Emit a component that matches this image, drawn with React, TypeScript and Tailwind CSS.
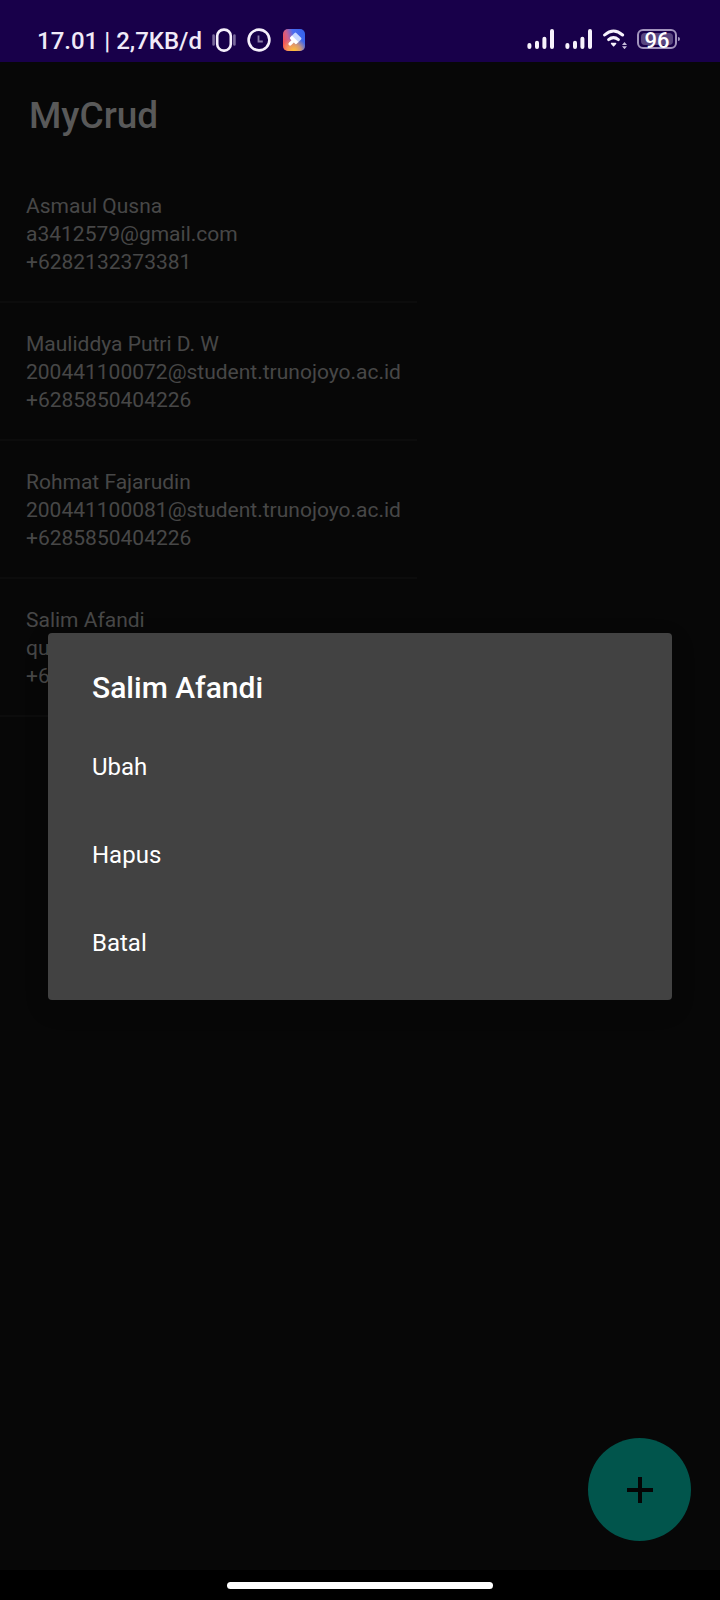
type Contact = { name: string; email: string; phone: string };

const contacts: Contact[] = [
  { name: "Asmaul Qusna", email: "a3412579@gmail.com", phone: "+6282132373381" },
  { name: "Mauliddya Putri D. W", email: "200441100072@student.trunojoyo.ac.id", phone: "+6285850404226" },
  { name: "Rohmat Fajarudin", email: "200441100081@student.trunojoyo.ac.id", phone: "+6285850404226" },
  { name: "Salim Afandi", email: "qu", phone: "+6" },
];

const actions = ["Ubah", "Hapus", "Batal"];

function VibrateIcon() {
  return (
    <svg className="h-6 w-6" viewBox="0 0 24 24" fill="none">
      <rect x="5.2" y="1.6" width="13.6" height="21" rx="6.5" stroke="#f5effb" strokeWidth="2.6" />
      <path d="M1.6 7.5v9M22.4 7.5v9" stroke="#7a6a9c" strokeWidth="2.6" strokeLinecap="round" />
    </svg>
  );
}

function ClockIcon() {
  return (
    <svg className="h-6 w-6" viewBox="0 0 24 24" fill="none">
      <circle cx="12" cy="12" r="10.4" stroke="#f5effb" strokeWidth="2.6" />
      <path d="M11.5 7.5v6h4.3" stroke="#8a7ba8" strokeWidth="1.8" />
    </svg>
  );
}

function ThemeIcon() {
  return (
    <svg className="h-6 w-6" viewBox="0 0 24 24">
      <defs>
        <linearGradient id="theme-base" x1="0" y1="0.6" x2="1" y2="0.3">
          <stop offset="0" stopColor="#f7504e" />
          <stop offset="0.25" stopColor="#d0608c" />
          <stop offset="0.55" stopColor="#4a6cf0" />
          <stop offset="1" stopColor="#3763ea" />
        </linearGradient>
        <radialGradient id="theme-glow" cx="0.5" cy="1" r="0.6">
          <stop offset="0" stopColor="#ffc233" />
          <stop offset="0.5" stopColor="#f9a654" stopOpacity="0.8" />
          <stop offset="1" stopColor="#f9a654" stopOpacity="0" />
        </radialGradient>
      </defs>
      <rect x="1" y="1" width="22" height="22" rx="5" fill="url(#theme-base)" />
      <rect x="1" y="1" width="22" height="22" rx="5" fill="url(#theme-glow)" />
      <g transform="rotate(45 12 12)">
        <path d="M7.4 6.6a1.2 1.2 0 0 1 1.2-1.2h6.8a1.2 1.2 0 0 1 1.2 1.2v4.2H7.4z" fill="#c9d8ff" />
        <path d="M7.4 10.3h9.2v2.4a1.2 1.2 0 0 1-1.2 1.2h-1.7v3.6a1.7 1.7 0 0 1-3.4 0v-3.6H8.6a1.2 1.2 0 0 1-1.2-1.2z" fill="#fff" />
      </g>
    </svg>
  );
}

function SignalIcon() {
  return (
    <svg className="h-5 w-7" viewBox="0 0 28 20" stroke="#f7f2fc" strokeWidth="4" strokeLinecap="round">
      <path d="M2.4 16v2M10 13.7v4.3M17.4 9.7v8.3M25 2v16" />
    </svg>
  );
}

function WifiIcon() {
  return (
    <svg className="h-5 w-6" viewBox="0 0 24 20" fill="none" stroke="#f7f2fc" strokeLinecap="round">
      <path d="M1.6 6Q10.5 -2 19.6 6" strokeWidth="3" />
      <path d="M5.6 10.6Q10.5 6.6 15.4 10.6" strokeWidth="3" />
      <path d="M8.6 14.4h4L10.6 16.8z" fill="#f7f2fc" strokeWidth="1.5" strokeLinejoin="round" />
      <path d="M19 16l2.5-3 2.5 3zM19 17.2l2.5 3 2.5-3z" fill="#c9bfdc" stroke="none" />
    </svg>
  );
}

function Battery() {
  return (
    <div className="flex items-center gap-px">
      <div className="flex h-5 w-10 items-center rounded-md border-2 border-[#a294bd] p-0.5">
        <div className="flex h-3 flex-1 items-center justify-center rounded-sm bg-[#59467f] pt-1 text-[22px] leading-5 font-medium text-white">
          96
        </div>
      </div>
      <span className="h-1 w-0.5 rounded-r-sm bg-[#a294bd]" />
    </div>
  );
}

function StatusBar() {
  return (
    <div className="flex h-[62px] items-end justify-between bg-[#18004a] pr-10 pb-[9px] pl-[37px]">
      <div className="flex items-center">
        <span className="pt-0.5 text-2xl leading-6 font-medium text-[#f0eaf8]">17.01 | 2,7KB/d</span>
        <div className="ml-2.5 flex items-center gap-[11px]">
          <VibrateIcon />
          <ClockIcon />
          <ThemeIcon />
        </div>
      </div>
      <div className="flex items-center gap-2.5 pb-1">
        <SignalIcon />
        <SignalIcon />
        <WifiIcon />
        <Battery />
      </div>
    </div>
  );
}

function ActionDialog() {
  return (
    <div className="absolute inset-0 flex items-center justify-center px-12">
      <div
        role="dialog"
        aria-modal="true"
        aria-labelledby="dialog-title"
        className="w-full rounded bg-[#424242] pb-[13px] text-white shadow-[0_8px_24px_rgba(0,0,0,0.15)]"
      >
        <h2 id="dialog-title" className="px-11 pt-[35px] pb-[15px] text-[30px] leading-10 font-medium">
          Salim Afandi
        </h2>
        <div className="flex flex-col">
          {actions.map((action) => (
            <button key={action} type="button" className="h-[88px] px-11 text-left text-2xl">
              {action}
            </button>
          ))}
        </div>
      </div>
    </div>
  );
}

export default function App() {
  return (
    <div className="flex min-h-screen flex-col bg-[#070707] font-['Roboto',sans-serif]">
      <StatusBar />
      <main className="relative flex flex-1 flex-col">
        <h1 className="px-[29px] pt-[30px] pb-[25px] text-[37px] leading-12 font-medium text-[#595959]">MyCrud</h1>
        <ul className="w-fit">
          {contacts.map((contact) => (
            <li
              key={contact.name}
              className="border-b-2 border-[#0c0c0c] pt-[27px] pr-4 pb-[25px] pl-[26px] text-[21px] leading-7 text-[#474747]"
            >
              <p>{contact.name}</p>
              <p>{contact.email}</p>
              <p>{contact.phone}</p>
            </li>
          ))}
        </ul>
        <button
          type="button"
          aria-label="Tambah kontak"
          className="mt-auto mr-[29px] mb-[29px] flex size-[103px] items-center justify-center self-end rounded-full bg-[#01554c]"
        >
          <svg className="h-[26px] w-[26px]" viewBox="0 0 26 26" stroke="#050505" strokeWidth="4">
            <path d="M13 0v26M0 13h26" />
          </svg>
        </button>
        <ActionDialog />
      </main>
      <div className="flex h-[30px] justify-center bg-black pt-3">
        <div className="h-[7px] w-[37%] rounded-full bg-white" />
      </div>
    </div>
  );
}
